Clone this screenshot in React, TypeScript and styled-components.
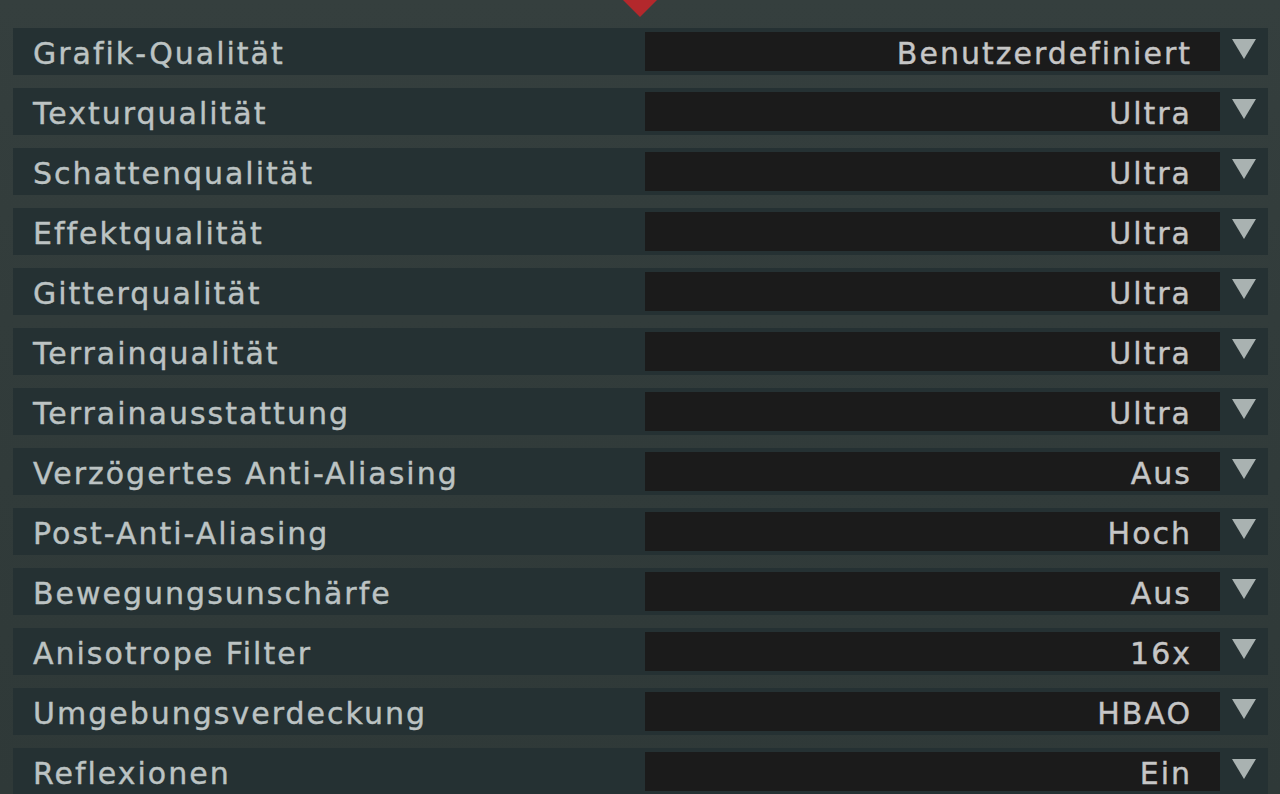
import React from "react";
import styled, { createGlobalStyle } from "styled-components";

const Global = createGlobalStyle`
  html, body { margin: 0; padding: 0; }
  body {
    width: 1280px;
    height: 794px;
    overflow: hidden;
    background: linear-gradient(180deg, #353f3e 0%, #323c3b 40%, #2f3938 100%);
    font-family: "DejaVu Sans", "Noto Sans", sans-serif;
  }
`;

const Screen = styled.div`
  position: relative;
  width: 1280px;
  height: 794px;
  box-sizing: border-box;
  padding: 28px 12px 0 13px;
  display: flex;
  flex-direction: column;
  gap: 13px;
`;

const TabMarker = styled.div`
  position: absolute;
  left: 628px;
  top: -12px;
  width: 24px;
  height: 24px;
  background: #b3282c;
  transform: rotate(45deg);
  transform-origin: center;
`;

const Row = styled.div`
  height: 47px;
  flex: 0 0 47px;
  display: flex;
  align-items: center;
  background: #253133;
  box-sizing: border-box;
`;

const Label = styled.div`
  flex: 0 0 632px;
  padding: 5px 0 0 20px;
  box-sizing: border-box;
  color: #bcc3c3;
  font-size: 30px;
  line-height: 42px;
  letter-spacing: 2px;
  -webkit-text-stroke: 0.4px currentColor;
  white-space: nowrap;
`;

const Select = styled.div`
  width: 575px;
  height: 39px;
  background: #1b1b1b;
  display: flex;
  align-items: center;
  justify-content: flex-end;
  padding: 5px 28px 0 0;
  box-sizing: border-box;
  color: #c6c6c6;
  font-size: 30px;
  line-height: 34px;
  letter-spacing: 2px;
  -webkit-text-stroke: 0.4px currentColor;
  white-space: nowrap;
`;

const Arrow = styled.svg`
  margin-left: 12px;
  width: 24px;
  height: 20px;
  flex: none;
  margin-top: -6px;
`;

const settings: [string, string][] = [
  ["Grafik-Qualität", "Benutzerdefiniert"],
  ["Texturqualität", "Ultra"],
  ["Schattenqualität", "Ultra"],
  ["Effektqualität", "Ultra"],
  ["Gitterqualität", "Ultra"],
  ["Terrainqualität", "Ultra"],
  ["Terrainausstattung", "Ultra"],
  ["Verzögertes Anti-Aliasing", "Aus"],
  ["Post-Anti-Aliasing", "Hoch"],
  ["Bewegungsunschärfe", "Aus"],
  ["Anisotrope Filter", "16x"],
  ["Umgebungsverdeckung", "HBAO"],
  ["Reflexionen", "Ein"],
];

export default function App() {
  return (
    <>
      <Global />
      <Screen>
        <TabMarker />
        {settings.map(([label, value]) => (
          <Row key={label}>
            <Label>{label}</Label>
            <Select>{value}</Select>
            <Arrow viewBox="0 0 24 20">
              <polygon points="0,0 24,0 12,20" fill="#a9b2b1" />
            </Arrow>
          </Row>
        ))}
      </Screen>
    </>
  );
}
